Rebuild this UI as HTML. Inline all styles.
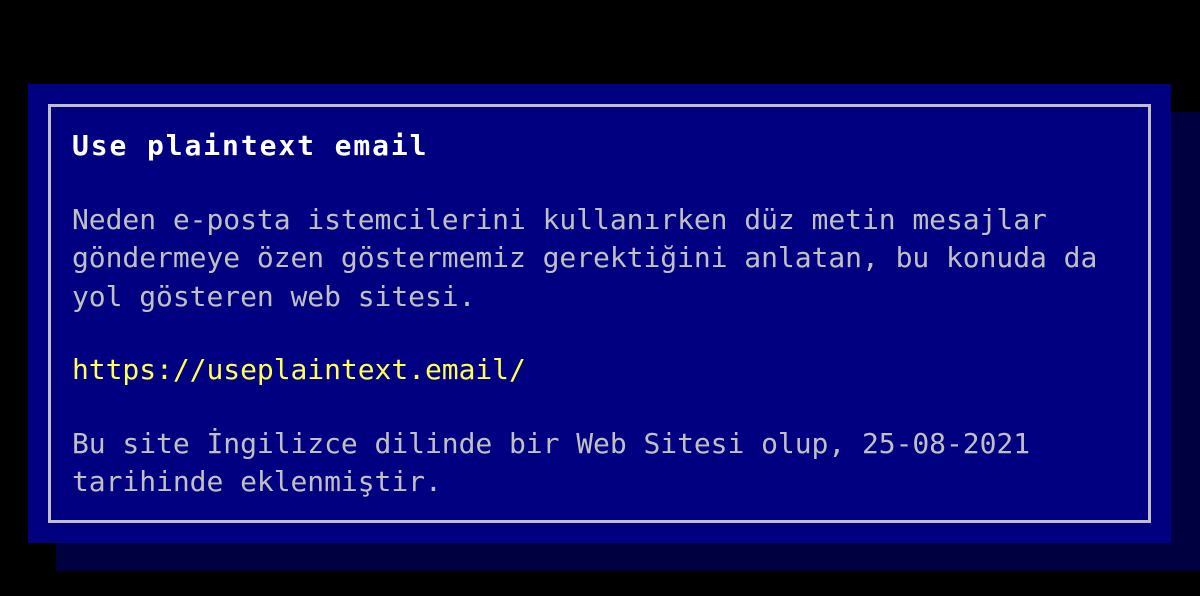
<!DOCTYPE html>
<html><head><meta charset="utf-8"><style>
html,body{margin:0;padding:0;background:#000;width:1200px;height:596px;overflow:hidden}
.sh{position:absolute;left:56px;top:112px;width:1144px;height:459px;background:#000040}
.box{position:absolute;left:28px;top:84px;width:1143px;height:459px;background:#000080}
.in{position:absolute;left:48px;top:104px;width:1097px;height:413px;border:3px solid #c0c0c0}
.t{position:absolute;left:72px;top:127px;width:1070px;font-family:"DejaVu Sans Mono","Liberation Mono",monospace;font-size:28px;line-height:38.5px;color:#c0c0c0;letter-spacing:-0.05px}
p{margin:0 0 35px 0}
.h{color:#fff;font-weight:bold;letter-spacing:1.9px}
.y{color:#ffff55}
</style></head><body>
<div class="sh"></div><div class="box"></div><div class="in"></div>
<div class="t">
<p class="h">Use plaintext email</p>
<p>Neden e-posta istemcilerini kullanırken düz metin mesajlar<br>göndermeye özen göstermemiz gerektiğini anlatan, bu konuda da<br>yol gösteren web sitesi.</p>
<p class="y">https://useplaintext.email/</p>
<p>Bu site İngilizce dilinde bir Web Sitesi olup, 25-08-2021<br>tarihinde eklenmiştir.</p>
</div>
</body></html>
